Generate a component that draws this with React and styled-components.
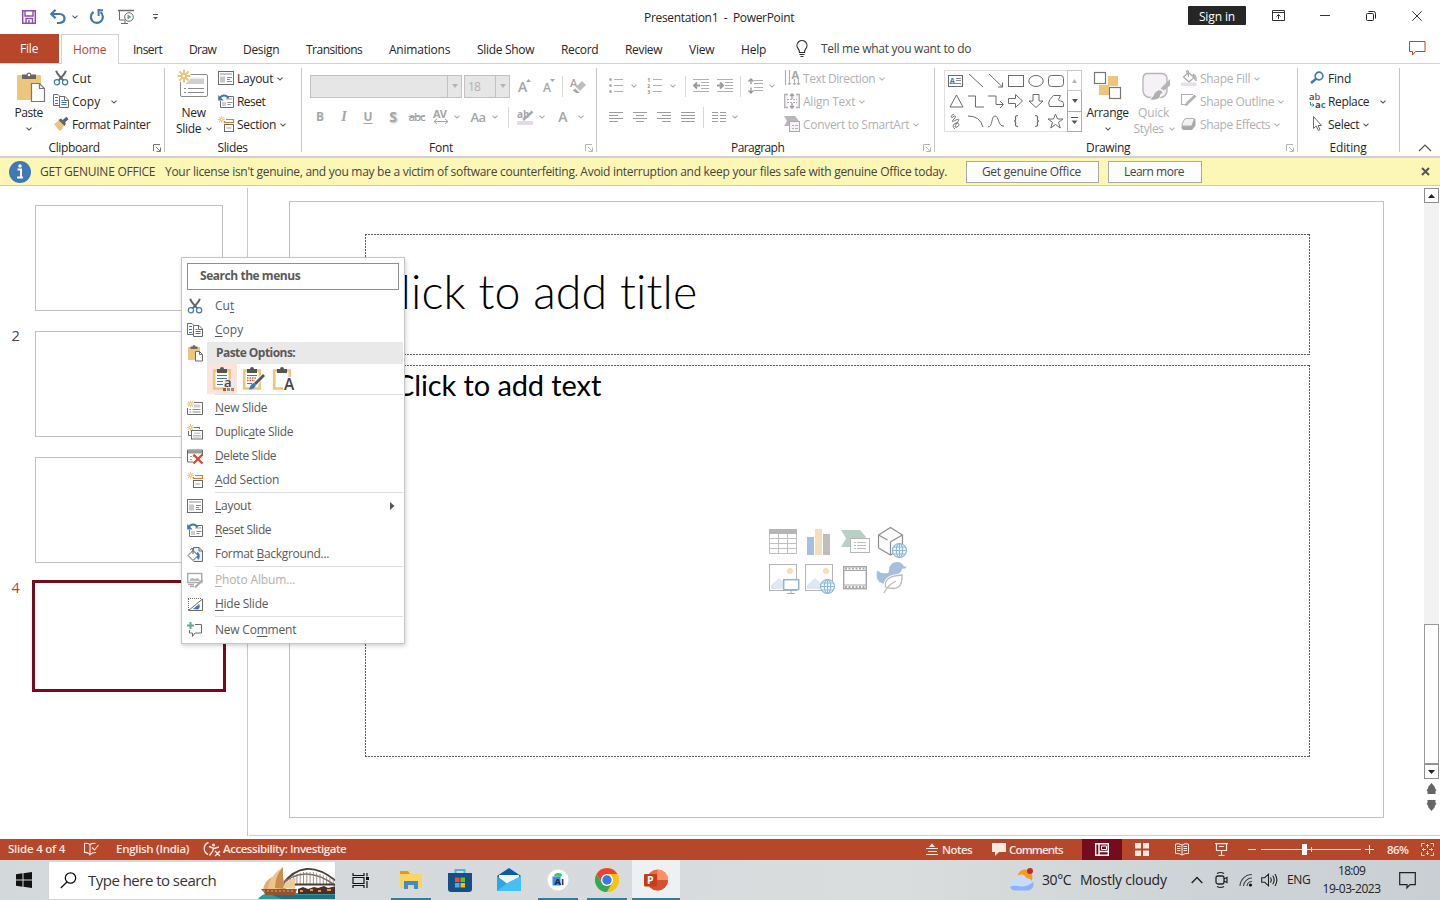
import React, { useLayoutEffect, useRef } from "react";
import styled, { createGlobalStyle, css } from "styled-components";

const Global = createGlobalStyle`
  * { box-sizing: border-box; }
  html, body { margin: 0; padding: 0; background: #fff; overflow: hidden; }
  body { font-family: "Open Sans", "Noto Sans", sans-serif; font-size: 12px; color: #262626; }
  svg { display: block; flex: none; overflow: visible; }
`;

/* ---------- text ---------- */

const Label = styled.span`
  display: block;
  flex: none;
  white-space: pre;
  font-family: ${(p) => p.$family || "inherit"};
  font-size: ${(p) => p.$size || 12}px;
  font-weight: ${(p) => p.$weight || 400};
  color: ${(p) => p.$color || "inherit"};
  line-height: ${(p) => p.$lh || 16}px;
  text-shadow: ${(p) => (p.$shadow ? "1px 1px 2px #bbb" : "none")};
  u { text-underline-offset: 2px; text-decoration-thickness: 1px; text-decoration-skip-ink: none; }
`;

/* A label whose tracking is adjusted so that it takes up w pixels. */
function Text({ w, size, weight, color, lh, family, shadow, children }) {
  const ref = useRef(null);
  useLayoutEffect(() => {
    const el = ref.current;
    if (!w) return;
    el.style.letterSpacing = "0px";
    el.style.width = "max-content";
    const natural = el.getBoundingClientRect().width;
    el.style.letterSpacing = `${(w - 0.8 - natural) / el.textContent.length}px`;
    el.style.width = `${w}px`;
  }, [w]);
  return (
    <Label ref={ref} $size={size} $weight={weight} $color={color} $lh={lh} $family={family} $shadow={shadow}>
      {children}
    </Label>
  );
}

/* ---------- icons ---------- */

const G = "#6b6b6b";
const B = "#3f78b5";
const Y = "#ecc67c";
const D = "#b1b1b1";

const Svg = ({ w = 17, h = w, children, ...r }) => (
  <svg width={w} height={h} viewBox={`0 0 ${w} ${h}`} fill="none" {...r}>{children}</svg>
);

const Chevron = ({ color = "#555" }) => (
  <Svg w={6} h={4}><path d="M.5 .7L3 3.1 5.5 .7" stroke={color} strokeWidth="1.1" /></Svg>
);

const CutIcon = () => (
  <Svg>
    <path d="M3.2 .8Q4 4 10.3 10.3M12.8 .8Q12 4 5.7 10.3" stroke="#666" strokeWidth="2" />
    <circle cx="3.9" cy="12.3" r="2.6" stroke={B} strokeWidth="1.2" />
    <circle cx="12.1" cy="12.3" r="2.6" stroke={B} strokeWidth="1.2" />
  </Svg>
);
const CopyIcon = () => (
  <Svg>
    <path d="M6 12.5H.5V1.5H5L7.5 4" stroke={G} />
    <path d="M2 4.5h3M2 7.5h3M2 10.5h3" stroke={B} />
    <path d="M6.5 3.5H12L15.5 7v7.500H6.500z" fill="#fff" stroke={G} />
    <path d="M11.500 3.500V7.500H15.500" stroke={G} />
    <path d="M8.500 7.500h2M8.500 9.500h5M8.500 11.500h5" stroke={B} />
  </Svg>
);
const PainterIcon = () => (
  <Svg>
    <path d="M1 8L6 4.500 11 10 8 14.500H6z" fill={Y} />
    <path d="M5.500 4L8 2.500 13 7.500 11.500 10z" fill="#5f5f5f" />
    <path d="M10.500 5.500L14.500 2" stroke="#5f5f5f" strokeWidth="3.200" />
  </Svg>
);
const PasteBig = () => (
  <Svg w={30} h={32}>
    <rect x="3" y="6" width="24" height="25" rx="1" fill={Y} />
    <path d="M8 5.500h4.500a2.600 2.600 0 0 1 5 0H22v4.500H8z" fill="#666" />
    <circle cx="15" cy="6" r="1.300" fill="#fff" />
    <path d="M17.500 14.500h8l5 5v13H17.500z" fill="#fff" stroke="#777" strokeWidth="1.200" />
    <path d="M25.500 14.500v5h5" stroke="#777" strokeWidth="1.200" />
  </Svg>
);
const Burst = ({ x, y, r = 5, sw = 1.2 }) => (
  <g transform={`translate(${x} ${y})`} stroke={Y} strokeWidth={sw}>
    {[0, 45, 90, 135].map((a) => <path key={a} d={`M-${r} 0H${r}`} transform={`rotate(${a})`} />)}
    <circle r={r * 0.36} fill="#fff" stroke={Y} />
  </g>
);
const NewSlideBig = () => (
  <Svg w={32} h={32}>
    <rect x="2.500" y="5.500" width="27" height="22" rx="1.500" fill="#fff" stroke="#8a8a8a" />
    <path d="M8 9.500h18v5.500H8z" fill="#cfcfcf" />
    <path d="M6 19.500h2M6 23.500h2M10 19.500h16M10 23.500h16" stroke="#8a8a8a" />
    <circle cx="6" cy="7" r="7" fill="#fff" />
    <Burst x={6} y={7} r={6.500} sw={2} />
  </Svg>
);
const LayoutIcon = () => (
  <Svg>
    <rect x=".5" y="1.500" width="15" height="13" fill="#fff" stroke={G} />
    <path d="M2 3h12v2H2zM2 6.500h5v6H2z" fill="#c8c8c8" />
    <path d="M9 7.500h5M9 9.500h3M9 11.500h5" stroke="#8a8a8a" />
  </Svg>
);
const ResetIcon = () => (
  <Svg>
    <path d="M9 3.500h6.500v11H2.500V8" stroke={G} />
    <path d="M8 5h6v2H8zM4 9h4v4H4z" fill="#cfcfcf" />
    <path d="M9.500 9.500h5M9.500 11.500h3" stroke="#8a8a8a" />
    <path d="M1.500 6C3 2 8 1 10.500 5.500" stroke={B} strokeWidth="2" />
    <path d="M.2 2v5.500h5.500z" fill={B} />
  </Svg>
);
const SectionIcon = () => (
  <Svg>
    <Burst x={3.500} y={3.500} r={3.300} sw={1} />
    <path d="M8 3.500h7.500v3H6.500V5" stroke="#e07a25" strokeWidth="1.200" />
    <rect x="6.500" y="8.500" width="9" height="7" stroke={G} />
    <path d="M8.500 11h5v2h-5z" fill="#cfcfcf" />
  </Svg>
);
const NewSlideIcon = () => (
  <Svg>
    <path d="M7 2.500h8.500v12H.5V8" stroke={G} />
    <path d="M7 4.500h6.500v3H7z" fill="#cfcfcf" />
    <path d="M2.500 9.500h1.500M5.500 9.500h8M2.500 12h1.500M5.500 12h8" stroke="#8a8a8a" />
    <Burst x={3.500} y={4} r={3.500} sw={1} />
  </Svg>
);
const DuplicateIcon = () => (
  <Svg>
    <path d="M7 3.500h5.500V5M1.500 7v4.500H4" stroke={G} />
    <rect x="4.500" y="6.500" width="11" height="8.500" fill="#fff" stroke={G} />
    <path d="M7 8.500h6.500v1.500H7z" fill="#cfcfcf" />
    <path d="M6 11.500h8M6 13h8" stroke="#aaa" strokeWidth=".8" />
    <Burst x={3.500} y={3.500} r={3.500} sw={1} />
  </Svg>
);
const DeleteIcon = () => (
  <Svg>
    <path d="M15.500 7V2H.5v12H6" stroke={G} />
    <path d="M1 2.500h14v3H1z" fill="#999" />
    <path d="M3 8.500h4M3 11.500h3" stroke="#999" strokeDasharray="2 1" />
    <path d="M6.500 6.500l9 9M15.500 6.500l-9 9" stroke="#d24726" strokeWidth="2.200" />
  </Svg>
);
const FormatBgIcon = () => (
  <Svg>
    <path d="M6.500 4V1.500H12L15.500 5v10.500H6.500" fill="#e9f0f7" stroke={G} />
    <path d="M12 1.500V5h3.500" stroke={G} />
    <path d="M10 6c3 1 3.500 4 1.500 8l-2-3z" fill={B} />
    <path d="M6 4.500L11 9.500 6 14.500 1 9.500z" fill="#fff" stroke="#555" />
    <path d="M6 8V3q-1.500-2-2.500 1" stroke="#555" />
  </Svg>
);
const PhotoAlbumIcon = () => (
  <Svg>
    <rect x=".7" y="1.500" width="14" height="9" stroke="#aaa" strokeWidth="1.400" />
    <path d="M2.500 9c1-4 4-3 5-2s3-4 5.500 2z" fill="#bbb" />
    <path d="M1 12.500h6M3 14.500h4" stroke="#aaa" strokeWidth="1.300" />
    <path d="M8 15.500L15.500 8" stroke="#aaa" strokeWidth="2.200" />
  </Svg>
);
const HideIcon = () => (
  <Svg>
    <path d="M1 2.500h13M1.500 3v11" stroke={G} strokeDasharray="1 1" />
    <path d="M1.500 14.500L15.500 3v11.500z" fill="#fff" stroke={G} />
    <path d="M6 13l6-5q2 3-1 5.500z" fill={B} /><path d="M10 9.500l2-1.500.500 2z" fill="#d98b3a" />
  </Svg>
);
const CommentAddIcon = () => (
  <Svg>
    <path d="M3.500 0v7M0 3.500h7" stroke="#6aa58e" strokeWidth="2" />
    <path d="M8 2.500h6.500v8.500H8l-2.500 3.500V11H2.500V8" stroke={G} />
  </Svg>
);
const PasteSmall = () => (
  <Svg>
    <path d="M1 2h12v13H1z" fill={Y} />
    <path d="M3.500 1.500h2a1.500 1.500 0 0 1 3 0h2V4h-7z" fill={G} />
    <path d="M8.500 6.500h4l3 3v6.500h-7z" fill="#fff" stroke={G} /><path d="M12.500 6.500v3h3" stroke={G} />
  </Svg>
);

const PasteOption = ({ kind }) => (
  <Svg w={24} h={24}>
    <path d="M3.200 3.500h15.600v18H3.200z" stroke={Y} strokeWidth="2.600" fill="#fff" />
    <path d="M6 2h3a2 2 0 0 1 4 0h3v4H6z" fill="#555" />
    {kind === "theme" && (<>
      <path d="M6 8.500h10M6 11.500h10M6 14.500h6M6 17.500h6" stroke={B} />
      <path d="M13 12.500h10v11H13z" fill="#fde4dc" />
      <text x="13" y="19.500" fontSize="13" fontWeight="600" fill="#444" fontFamily="Open Sans">a</text>
      <path d="M12 21h3v3h-3z" fill="#d24726" /><path d="M16 21h3v3h-3z" fill="#5ea58c" /><path d="M20 21h3v3h-3z" fill="#e07a25" />
    </>)}
    {kind === "source" && (<>
      <path d="M6 8.500h10M6 16.500h5" stroke={B} />
      <path d="M6 11h10M6 13.500h8" stroke="#d9583a" strokeWidth="1.600" strokeDasharray="1.500 1" />
      <path d="M23 8L14 17" stroke="#fff" strokeWidth="4.500" />
      <path d="M23 8L14 17" stroke="#555" strokeWidth="2.800" />
      <path d="M8 22.500q2-7 5.500-6.500 3 2-1 5.500-2 1-4.500 1z" fill={B} />
    </>)}
    {kind === "text" && (<>
      <path d="M12 10h12v14H12z" fill="#fff" />
      <text x="13" y="23" fontSize="15.500" fontWeight="600" fill="#444" fontFamily="Open Sans">A</text>
    </>)}
  </Svg>
);

const ListIcon = ({ kind }) => (
  <Svg w={16}>
    {kind === "bullets" && [3, 9, 15].map((y) => <g key={y}><circle cx="2.500" cy={y - 1.500} r="1.500" fill={D} /><path d={`M6 ${y - 1.500}h9`} stroke={D} /></g>)}
    {kind === "numbers" && [2, 8, 14].map((y, i) => <g key={y}><text x="0.500" y={y + 1.500} fontSize="4.400" fontWeight="800" fill="#999" fontFamily="Open Sans">{i + 1}</text><path d={`M6 ${y - .5}h9`} stroke={D} /></g>)}
    {kind === "dec" && (<><path d="M0 1.500h16M8 4.500h8M8 7.500h8M8 10.500h8M0 13.500h16" stroke={D} /><path d="M7 7.500H1M4 4.500l-3 3 3 3" stroke="#9a9a9a" strokeWidth="1.800" /></>)}
    {kind === "inc" && (<><path d="M0 1.500h16M8 4.500h8M8 7.500h8M8 10.500h8M0 13.500h16" stroke={D} /><path d="M0 7.500h6M3 4.500l3 3-3 3" stroke="#9a9a9a" strokeWidth="1.800" /></>)}
    {kind === "spacing" && (<><path d="M6 2.500h9M6 5.500h9M6 9.500h9M6 12.500h9" stroke={D} /><path d="M3 1v5M.5 3.500L3 1l2.500 2.500M3 9.500v6M.5 12.500L3 15l2.500-2.500" stroke="#9a9a9a" strokeWidth="1.400" /></>)}
    {kind === "left" && <path d="M1 3.500h14M1 6.500h9M1 9.500h14M1 12.500h9" stroke="#9c9c9c" />}
    {kind === "center" && <path d="M1 3.500h14M4 6.500h8M1 9.500h14M4 12.500h8" stroke="#9c9c9c" />}
    {kind === "right" && <path d="M1 3.500h14M6 6.500h9M1 9.500h14M6 12.500h9" stroke="#9c9c9c" />}
    {kind === "justify" && <path d="M1 3.500h14M1 6.500h14M1 9.500h14M1 12.500h14" stroke="#9c9c9c" />}
    {kind === "columns" && <path d="M1 3.500h6M1 6.500h6M1 9.500h6M1 12.500h6M9 3.500h6M9 6.500h6M9 9.500h6M9 12.500h6" stroke="#9c9c9c" />}
  </Svg>
);

const TextDirIcon = () => (
  <Svg>
    <path d="M1.500 0v15M5.500 0v15M10.500 9v6M14.500 9v6" stroke={D} strokeWidth="1.200" />
    <path d="M9 13l1.500 2L12 13M13 13l1.500 2L16 13M4 13l1.500 2L7 13" stroke={D} />
    <text x="7.500" y="8.500" fontSize="11" fontWeight="700" fill="#a5a5a5" fontFamily="Open Sans">A</text>
  </Svg>
);
const AlignTextIcon = () => (
  <Svg>
    <path d="M4 1.500H.7v13H4M12 1.500h3.300v13H12" fill="#f6f1f7" stroke={D} strokeWidth="1.300" />
    <path d="M3 6.500h10M3 9.500h10" stroke={D} strokeDasharray="2 1" />
    <path d="M8 6V1M6 3l2-2 2 2M8 10v5M6 13l2 2 2-2" stroke="#999" strokeWidth="1.300" />
  </Svg>
);
const SmartArtIcon = () => (
  <Svg>
    <path d="M0 0h11l4 5H5v5H0l3-5z" fill="#b8b8b8" />
    <rect x="5.500" y="5.500" width="10" height="10" fill="#f7f1f8" stroke="#aaa" />
    <path d="M8 9.500h2M11 9.500h3M8 12.500h2M11 12.500h3" stroke={D} />
  </Svg>
);
const FillIcon = () => (
  <Svg>
    <path d="M0 12.500h15.500v3.500H0z" fill="#e6dfe8" />
    <path d="M7.500 2.500L13 7.500 8 12 2.500 7z" stroke="#aaa" fill="#fff" strokeWidth="1.200" />
    <path d="M7.500 7V1q-1.500-2-2.500 1M12 4q4 1 3 7l-2-3z" stroke="#aaa" fill="#aaa" fillOpacity=".6" />
  </Svg>
);
const OutlineIcon = () => (
  <Svg>
    <path d="M12 1.500H.5v10h4" stroke={D} strokeWidth="1.200" />
    <path d="M6 10.500L14.500 2.500" stroke="#b3b3b3" strokeWidth="3" /><path d="M4 13l1-3.500 2.500 2.500z" fill="#aaa" />
  </Svg>
);
const EffectsIcon = () => (
  <Svg>
    <path d="M4 2.500h9q2 0 1.500 2v5L11 14H3q-2.500 0-2.500-3z" fill="#a8a8a8" />
    <path d="M5.500 2.500H12q1.500 0 1 1.500l-1.800 5q-.5 1-1.500 1H2q-1.500 0-1-1.500l2-4.500q.7-1.500 2.500-1.500z" fill="#f4f0f5" stroke={D} />
  </Svg>
);
const ArrangeIcon = () => (
  <Svg w={30} h={32}>
    <path d="M15 7h10v10H15zM6 16h10v10H6z" fill={Y} />
    <rect x="1.500" y="3.500" width="11" height="11" fill="#fff" stroke="#777" strokeWidth="1.200" />
    <rect x="16.500" y="18.500" width="11" height="11" fill="#fff" stroke="#777" strokeWidth="1.200" />
  </Svg>
);
const QuickStylesIcon = () => (
  <Svg w={30} h={32}>
    <path d="M8 4.500h15q5 1 5 5v13q-1 5-6 6H10q-5-1-6-6V10q0-5 4-5.500z" fill="#f5f1f6" stroke="#b5b5b5" strokeWidth="1.300" />
    <path d="M31 10v6.500l-6 5-3.500-2z" fill="#b5b5b5" />
    <path d="M20 20.500q3 0 4 3-3 2-3 5-4 4-11 2 4-2 5-6 2-3 5-4z" fill="#b0b0b0" stroke="#fff" />
  </Svg>
);
const FindIcon = () => (
  <Svg><circle cx="9" cy="6" r="3.800" stroke={B} strokeWidth="1.700" /><path d="M6.500 8.500L1 13" stroke={B} strokeWidth="2.400" /></Svg>
);
const ReplaceIcon = () => (
  <Svg>
    <text x="-1" y="6.500" fontSize="9.500" fontWeight="600" fill="#444" fontFamily="Open Sans">a<tspan fill="#8250a4">b</tspan></text>
    <text x="5" y="15" fontSize="9.500" fontWeight="700" fill="#444" fontFamily="Open Sans">a<tspan fill={B}>c</tspan></text>
    <path d="M.5 9v3h3.500M2.500 10.500L4 12l-1.500 1.500" stroke={B} />
  </Svg>
);
const SelectIcon = () => (
  <Svg><path d="M3.500 .5v12l2.700-2.500 2.200 4.500 1.600-.8-2-4.200h3.500z" fill="#fff" stroke={G} /></Svg>
);
const Launcher = ({ color = "#8a8a8a" }) => (
  <Svg w={9}><path d="M.5 7V.5H7M3 3l4 4M7.500 3.500v4h-4" stroke={color} /></Svg>
);

const shapes = [
  <><rect x="2.500" y="4.500" width="14" height="11" stroke={G} /><text x="3.500" y="12.500" fontSize="8" fontWeight="700" fill={B} fontFamily="Open Sans">A</text><path d="M10 7.500h5M10 9.500h5M4 12.500h11" stroke="#8a8a8a" /></>,
  <path d="M3 3l14 13" stroke={G} />,
  <path d="M3 3l13.500 13M16.500 11.500V16h-4.500" stroke={G} />,
  <rect x="2.500" y="4.500" width="15" height="11" stroke={G} />,
  <ellipse cx="10" cy="10" rx="7.200" ry="5.500" stroke={G} />,
  <rect x="2.500" y="4.500" width="15" height="11" rx="3" stroke={G} />,
  <path d="M10.500 4L17 16H4z" stroke={G} />,
  <path d="M2 5h7.500v11H18" stroke={G} />,
  <path d="M2 5h8v8.500h7M14 10l3.500 3.500L14 17" stroke={G} />,
  <path d="M2.500 7.500h7V3.500l7 6.500-7 6.500v-4h-7z" stroke={G} />,
  <path d="M7 3.500h6V10h4l-7 6.500L3 10h4z" stroke={G} />,
  <path d="M3.500 15.500q-2-4 .5-7l3.500-4h7l-2 4q0 1.500 2 1.500 3 0 3 2.500v3z" stroke={G} />,
  <path d="M8 3.500C4 4 5 8 7 6s4-1 1 2-2 3 2 1 3 0 1 3-3 5 0 4 2-5-1-4-4 4-1 6" stroke={G} />,
  <path d="M2 5q12 0 15 11" stroke={G} />,
  <path d="M2 16C7 16 5 5 9 5s3 11 9 10" stroke={G} />,
  <path d="M12 4.500q-3 0-2.500 2.500.5 3-1.500 3 2 0 1.500 3-.5 2.500 2.500 2.500" stroke={G} strokeWidth="1.200" />,
  <path d="M9 4.500q3 0 2.500 2.500-.5 3 1.500 3-2 0-1.500 3 .5 2.500-2.500 2.500" stroke={G} strokeWidth="1.200" />,
  <path d="M9.500 3l2 5h5.500l-4.500 3.300L14.300 17 9.500 13.500 4.700 17l1.800-5.700L2 8h5.500z" stroke={G} />,
];

/* ---------- frame ---------- */

const Window = styled.div`
  position: relative; width: 1440px; height: 900px; display: flex; flex-direction: column; background: #fff; overflow: hidden;
`;
const Row = styled.div`display: flex; align-items: center; padding-top: 1px;`;
const Slot = styled.div`
  display: flex; flex: none; align-items: center; justify-content: ${(p) => (p.$start ? "flex-start" : "center")};
  width: ${(p) => p.$w}px; margin-left: ${(p) => p.$ml || 0}px; padding-bottom: ${(p) => (p.$up ? 1 : 0)}px;
`;

const TitleBar = styled.header`display: flex; height: 34px; flex: none;`;
const QuickAccess = styled.div`display: flex; width: 644px; height: 34px; align-items: center;`;
const SignIn = styled.button`
  display: flex; justify-content: center; align-items: center; width: 58px; height: 19px; margin: 6px 10px 0 auto; padding: 2px 0 0;
  border: 0; border-radius: 1px; background: #262626; color: #fff; font: inherit;
`;
const WinButton = styled.div`display: flex; width: 46px; height: 31px; align-items: center; justify-content: center;`;

const TabStrip = styled.nav`display: flex; height: 30px; flex: none; border-bottom: 1px solid #d2d2d2;`;
const FileTab = styled.div`display: flex; width: 59px; height: 29px; justify-content: center; align-items: center; background: #b7472a; color: #fff;`;
const HomeTab = styled.div`
  display: flex; width: 58px; height: 30px; margin-left: 2px; padding-top: 1px; justify-content: center; align-items: center;
  border: 1px solid #d2d2d2; border-bottom: 0; background: #fff; color: #b7472a;
`;
const Tabs = styled.div`display: flex; align-items: center; gap: 26px; margin-left: 14px; padding-top: 3px;`;
const TellMe = styled.div`display: flex; align-items: center; margin-left: 28px; color: #444; svg { margin-right: 12px; }`;

const Ribbon = styled.section`display: flex; height: 94px; flex: none; border-bottom: 2px solid #d2d0ce;`;
const GroupBox = styled.div`display: flex; flex-direction: column; width: ${(p) => p.$w}px; flex: none; height: 92px; padding-top: 3px;`;
const GroupBody = styled.div`display: flex; height: 72px; align-items: flex-start;`;
const GroupFoot = styled.div`
  display: flex; height: 16px; margin-top: 1px; align-items: center; justify-content: center;
  svg { margin: 0 2px 0 4px; }
`;
const FootText = styled.div`flex: 1; display: flex; justify-content: center;`;
const GroupLine = styled.div`width: 1px; height: 84px; margin-top: 4px; flex: none; background: #c8c6c4;`;
const SmallLine = styled.div`width: 1px; height: 21px; flex: none; margin-left: ${(p) => p.$ml}px; background: #d8d8d8;`;
const Commands = styled.div`display: flex; flex-direction: column; margin-left: ${(p) => p.$ml}px;`;
const Command = styled.div`
  display: flex; align-items: center; height: 23px; color: ${(p) => (p.$off ? "#b1b1b1" : "#262626")};
  > svg:first-child { margin-right: ${(p) => p.$gap ?? 2}px; }
  > span { padding-top: 1px; }
`;
const Big = styled.div`
  display: flex; flex-direction: column; align-items: center; width: ${(p) => p.$w}px; margin-left: ${(p) => p.$ml}px; padding-top: 2px; flex: none;
  color: ${(p) => (p.$off ? "#b1b1b1" : "#262626")};
`;
const BigLine = styled.div`
  display: flex; height: 16px; align-items: center; justify-content: center; gap: 4px;
  ${Big} > svg + & { margin-top: 4px; }
`;
const ToolRows = styled.div`display: flex; flex-direction: column; margin-left: ${(p) => p.$ml}px; padding-top: 8px; gap: 9px;`;
const ToolRow = styled.div`display: flex; height: 22px; align-items: center; color: #a6a6a6;`;
const Combo = styled.div`
  display: flex; align-items: center; width: ${(p) => p.$w}px; height: 23px; margin: 0 2px 0 ${(p) => p.$ml || 0}px; border: 1px solid #c2c2c2; background: #e6e6e6; color: #b1b1b1;
`;
const ComboValue = styled.div`flex: 1; height: 21px; padding: 3px 0 0 3px;`;
const ComboArrow = styled.div`display: flex; width: 14px; height: 21px; align-items: center; justify-content: center; border-left: 1px solid #c2c2c2;`;
const Gallery = styled.div`display: flex; width: 138px; height: 62px; margin: 3px 0 0 9px; border: 1px solid #e1dfdd; border-right: 0; flex: none;`;
const ShapeGrid = styled.div`display: grid; grid-template-columns: repeat(6, 20px); grid-auto-rows: 20px; width: 122px; padding-left: 1px;`;
const GalleryScroll = styled.div`display: flex; flex-direction: column; width: 15px; margin: -1px 0;`;
const GalleryButton = styled.div`
  display: flex; flex: 1; align-items: center; justify-content: center; border: 1px solid ${(p) => (p.$off ? "#c9c9c9" : "#ababab")}; & + & { border-top: 0; }
`;
const Collapse = styled.div`margin: 79px 0 0 18px;`;

const Banner = styled.div`
  display: flex; height: 28px; flex: none; align-items: center; padding: 0 10px 0 9px; background: #fcf7b6; border-bottom: 1px solid #d3d28b; color: #444;
  > span, > div > span { padding-top: 1px; }
`;
const BannerButton = styled.button`
  display: flex; align-items: center; justify-content: center; width: ${(p) => p.$w}px; height: 22px; margin-left: ${(p) => p.$ml}px; padding: 1px 2px 0 0;
  border: 1px solid #ababab; background: #fdfdfd; color: #444; font: inherit;
`;

function Group({ w, name, nameW, launch, off, children }) {
  return (
    <>
      <GroupBox $w={w}>
        <GroupBody>{children}</GroupBody>
        <GroupFoot>
          <FootText><Text w={nameW}>{name}</Text></FootText>
          {launch && <Launcher color={off ? "#b5b5b5" : "#777"} />}
        </GroupFoot>
      </GroupBox>
      <GroupLine />
    </>
  );
}
function Cmd({ icon, w, off, gap, menu, menuGap = 5, children }) {
  return (
    <Command $off={off} $gap={gap}>
      {icon}
      <Text w={w}>{children}</Text>
      {menu && <Slot $w={6} $ml={menuGap}><Chevron color={off ? "#b1b1b1" : "#555"} /></Slot>}
    </Command>
  );
}
const Drop = ({ w = 8, ml = 0 }) => <Slot $w={w} $ml={ml}><Chevron color="#a9a9a9" /></Slot>;
const Tri = ({ color = "#555", up, w = 7 }) => (
  <Svg w={w} h={4}><path d={up ? `M0 4h${w}L${w / 2} 0z` : `M0 0h${w}L${w / 2} 4z`} fill={color} /></Svg>
);

/* ---------- workspace ---------- */

const Work = styled.main`display: flex; flex: none; height: 653px;`;
const Sidebar = styled.aside`
  width: 248px; margin-top: 2px; height: 648px; padding: 17px 0 0 11px; border-right: 1px solid #c8c8c8; flex: none; display: flex; flex-direction: column; gap: 20px;
`;
const ThumbRow = styled.div`display: flex; height: 106px;`;
const ThumbNo = styled.div`width: 24px; flex: none; padding: 1px 0 0 .5px; font-size: 14.5px; line-height: 8px; color: ${(p) => (p.$active ? "#b7472a" : "#444")};`;
const Thumb = styled.div`
  background: #fff;
  ${(p) => p.$active
    ? css`width: 194px; height: 112px; margin: -3px 0 0 -3px; border: 3px solid #750b1c;`
    : css`width: 188px; height: 106px; border: 1px solid #c2c2c2;`}
`;
const Stage = styled.section`
  flex: 1; height: 650px; margin-left: 1px; padding: 15px 0 0 40px; border-bottom: 1px solid #cfcfcf;
`;
const Slide = styled.div`width: 1095px; height: 617px; padding: 32px 0 0 75px; border: 1px solid #c2c2c2;`;
const dashX = "repeating-linear-gradient(90deg, #5c5c5c 0 2px, transparent 2px 3px)";
const dashY = "repeating-linear-gradient(180deg, #5c5c5c 0 2px, transparent 2px 3px)";
const Placeholder = styled.div`
  width: 945px; height: ${(p) => p.$h}px; margin-bottom: 10px; display: flex; flex-direction: column; color: #000;
  background: ${dashX} top / 100% 1px no-repeat, ${dashX} bottom / 100% 1px no-repeat, ${dashY} left / 1px 100% no-repeat, ${dashY} right / 1px 100% no-repeat;
`;
const TitleText = styled.div`padding: 27px 0 0 4px;`;
const BodyText = styled.div`display: flex; gap: 11px; padding: 0 0 1px 9px;`;
const InsertGrid = styled.div`display: grid; grid-template-columns: repeat(4, 36px); grid-auto-rows: 36px; margin: 118px 0 0 400px;`;
const Scroll = styled.div`
  display: flex; flex-direction: column; width: 16px; height: 650px; padding: 2px 1px 0 0; align-items: center; border-bottom: 1px solid #cfcfcf;
`;
const ScrollButton = styled.div`display: flex; width: 15px; height: 15px; align-items: center; justify-content: center; border: 1px solid #8f8f8f; flex: none;`;
const Track = styled.div`width: 15px; height: 421px; background: #f2f2f2; flex: none;`;
const ThumbBar = styled.div`width: 15px; height: 140px; border: 1px solid #999; flex: none;`;
const PageArrows = styled.div`display: flex; flex-direction: column; gap: 6px; padding-top: 4px;`;

const DoubleArrow = ({ flip }) => (
  <Svg w={11} h={11}><path transform={flip ? "rotate(180 5.500 5.500)" : undefined} d="M5.500 0L9 4H8.500L10.500 8H9.500V11H1.500V8H.5L2.500 4H2z" fill="#666" /></Svg>
);
const Globe = ({ x, y }) => (
  <g stroke="#8ab8e0" strokeWidth="1.200" transform={`translate(${x} ${y})`}>
    <circle r="7" fill="#fff" /><ellipse rx="3.200" ry="7" /><path d="M-7 0H7M0-7V7M-6-3.500H6M-6 3.500H6" />
  </g>
);
const Cell = ({ children }) => <Svg w={36}>{children}</Svg>;

/* ---------- context menu ---------- */

const Menu = styled.div`
  position: absolute; left: 181px; top: 257px; width: 224px; height: 387px; padding: 5px 0 0; border: 1px solid #c6c6c6;
  background: #fff; color: #5a5a5a; box-shadow: 1px 2px 4px rgba(0, 0, 0, .18);
`;
const MenuSearch = styled.div`display: flex; align-items: center; width: 212px; height: 27px; margin: 0 0 4px 5px; padding: 0 0 2px 12px; border: 1px solid #8f8f8f;`;
const MenuItem = styled.div`
  display: flex; align-items: center; height: 24px; padding-left: 5px; color: ${(p) => (p.$off ? "#b1b1b1" : "#5a5a5a")};
  > svg:first-child { margin-right: 11px; }
`;
const MenuArrow = styled.div`margin: 0 9px 0 auto;`;
const MenuHead = styled.div`display: flex; height: 22px; padding-left: 5px; align-items: center; > svg { margin-right: 3px; }`;
const MenuHeadText = styled.div`flex: 1; height: 22px; margin-right: 1px; padding: 3px 0 0 9px; background: #e9e9e9;`;
const PasteRow = styled.div`display: flex; height: 30px; padding-left: 25px;`;
const PasteCell = styled.div`display: flex; width: 30px; height: 30px; align-items: center; justify-content: center; padding: 0 0 0 2px; background: ${(p) => (p.$on ? "#fde3dc" : "none")};`;
const MenuLine = styled.div`height: 1px; margin: 0 1px 1px 33px; background: #dcdfe2;`;

function Item({ icon, w, off, arrow, children }) {
  return (
    <MenuItem $off={off}>
      {icon}<Text w={w}>{children}</Text>
      {arrow && <MenuArrow><Svg w={5} h={8}><path d="M0 0l4.500 4L0 8z" fill="#555" /></Svg></MenuArrow>}
    </MenuItem>
  );
}

/* ---------- bottom bars ---------- */

const Status = styled.footer`display: flex; height: 21px; flex: none; align-items: center; background: #b7472a; color: #fbe9e4;`;
const ViewSlot = styled.div`display: flex; width: ${(p) => p.$w}px; height: 21px; align-items: center; justify-content: center; flex: none; margin-left: ${(p) => p.$ml || 0}px; background: ${(p) => (p.$on ? "#750b1c" : "none")};`;
const Taskbar = styled.footer`
  display: flex; height: 40px; flex: none; align-items: center; background: linear-gradient(90deg, #d3d8db 0%, #d7dadd 35%, #dadddd 62%, #cdd3d6 85%, #c9cfd3 100%);
`;
const SearchBox = styled.div`display: flex; width: 288px; height: 39px; align-items: center; background: #fff; border: 1px solid #d5d5d5; padding-left: 11px; overflow: hidden;`;
const TaskButton = styled.div`
  display: flex; width: ${(p) => p.$w || 49}px; height: 40px; align-items: center; justify-content: center; flex: none;
  background: ${(p) => (p.$open ? "linear-gradient(#2b7f9f, #2b7f9f) bottom / 40px 2px no-repeat" : "none")};
  ${(p) => p.$focus && css`background: linear-gradient(#2b7f9f, #2b7f9f) bottom / 100% 2px no-repeat #eff0f1; width: 48px; margin-left: 1px;`}
`;
const Clock = styled.div`display: flex; flex-direction: column; align-items: center; width: 60px; margin-left: 11px; gap: 2px;`;

const OperaHouse = () => (
  <Svg w={78} h={38} viewBox="0 0 78 38">
    <path d="M0 38q4-5 10-6h68v6z" fill="#2b9aa0" /><path d="M14 34h64v4H24z" fill="#22707f" />
    <path d="M24 24Q46-6 78 20" stroke="#4a423c" strokeWidth="1.800" /><path d="M22 25Q46 1 78 25" stroke="#7a6c5e" strokeWidth="1.300" />
    {Array.from({ length: 15 }, (_, i) => <path key={i} d={`M${29 + i * 3.300} ${Math.max(11, 17 - i * 1.300, i * 1.300)}V23`} stroke="#85796c" strokeWidth=".8" />)}
    <path d="M20 23.500h58" stroke="#4a3a32" strokeWidth="1.800" />
    <path d="M40 28l5-2 5 2 6-2 4 1 6-2 4 2 8-2v8H40z" fill="#4a2d2c" /><path d="M42 29h3v2h-3zM52 28h3v2h-3zM60 29h3v2h-3zM69 28h4v2h-4z" fill="#e6963c" />
    <path d="M5 29q1-9 9-13-3 8 1 13z" fill="#e0b078" /><path d="M10 28Q11 15 25 6q-1 14 3 22z" fill="#edc48a" />
    <path d="M17 27Q17 15 25 6q-1 12 3 22z" fill="#c88d50" /><path d="M25 27q1-8 13-10-2 5-1 11z" fill="#efcb97" />
    <path d="M3 28h36l-2 6H8z" fill="#96522c" /><path d="M5 30h32" stroke="#e7a45e" strokeDasharray="2 2" />
  </Svg>
);
const ChromeIcon = () => (
  <Svg w={24}>
    <circle cx="12" cy="12" r="12" fill="#fbc116" />
    <path d="M1.600 6A12 12 0 0 1 22.400 6H12L7 15z" fill="#ea4335" />
    <path d="M1.600 6A12 12 0 0 0 12 24l5.200-9-5.200 2-5.200-2z" fill="#34a853" />
    <path d="M22.400 6A12 12 0 0 1 12 24l5.200-9L17 8 12 6z" fill="#fbc116" />
    <circle cx="12" cy="12" r="6" fill="#fff" /><circle cx="12" cy="12" r="4.700" fill="#3b78e7" />
  </Svg>
);

const tabs = [["Insert", 30], ["Draw", 28], ["Design", 37], ["Transitions", 57], ["Animations", 62], ["Slide Show", 58], ["Record", 38], ["Review", 38], ["View", 26], ["Help", 26]];

export default function App() {
  return (
    <Window>
      <Global />
      <TitleBar>
        <QuickAccess>
          <Slot $w={16} $ml={21}>
            <Svg w={16}><path d="M1.700 1.700h12.600v12.600H1.700z" stroke="#8a4fa8" strokeWidth="1.500" /><path d="M4 2v5h8V2M5 14v-4.500h6.500V14M8 11v3" stroke="#8a4fa8" strokeWidth="1.400" /></Svg>
          </Slot>
          <Slot $w={16} $ml={13}>
            <Svg w={16}><path d="M1.500 5H9.500q5 .5 5 4.500t-5 4.500H7" stroke={B} strokeWidth="2.200" /><path d="M5.500 .8L1.300 5l4.200 4.200" stroke={B} strokeWidth="2.200" /></Svg>
          </Slot>
          <Slot $w={8} $ml={5}><Chevron /></Slot>
          <Slot $w={16} $ml={10}>
            <Svg w={16}><path d="M4.500 3A6 6 0 1 0 11.500 3.200" stroke={B} strokeWidth="2.200" /><path d="M8.500 1.200H14M9.600 0v7" stroke={B} strokeWidth="2" /></Svg>
          </Slot>
          <Slot $w={16} $ml={13}>
            <Svg w={17} h={16}><path d="M0 1.500h16" stroke={G} strokeWidth="1.500" /><path d="M1.500 2v9h6M3 14.500h7M7 11.500v3" stroke={G} /><circle cx="11" cy="8" r="4.300" stroke={G} fill="#fff" /><path d="M9.500 5.500l4 2.500-4 2.500z" fill="#5ea58c" /></Svg>
          </Slot>
          <Slot $w={8} $ml={17}><Svg w={7} h={7}><path d="M1 .5h5" stroke="#555" /><path d="M1 3h5L3.500 5.500z" fill="#555" /></Svg></Slot>
        </QuickAccess>
        <Row><Text w={151}>{"Presentation1  -  PowerPoint"}</Text></Row>
        <SignIn><Text w={37}>Sign in</Text></SignIn>
        <WinButton><Svg w={14} h={12}><path d="M.5 .5h12v10H.5zM.5 2.500h12M6.500 9V5M4.500 6.500l2-2 2 2" stroke="#333" /></Svg></WinButton>
        <WinButton><Svg w={10} h={10}><path d="M0 4.500h10" stroke="#333" /></Svg></WinButton>
        <WinButton><Svg w={10} h={10}><rect x=".5" y="2.500" width="7" height="7" rx="1" stroke="#222" /><path d="M2.500 .5h5q2 0 2 2v5" stroke="#222" /></Svg></WinButton>
        <WinButton><Svg w={10} h={10}><path d="M.3 .3l9.400 9.400M9.700 .3L.3 9.700" stroke="#333" /></Svg></WinButton>
      </TitleBar>

      <TabStrip>
        <FileTab><Text w={19}>File</Text></FileTab>
        <HomeTab><Text w={34}>Home</Text></HomeTab>
        <Tabs>{tabs.map(([t, w]) => <Text key={t} w={w}>{t}</Text>)}</Tabs>
        <TellMe>
          <Svg w={14} h={18}><path d="M4.500 12.500Q4.500 10 3 8.500A5 5 0 1 1 11 8.500Q9.500 10 9.500 12.500zM4.500 14.500h5M5.500 16.500h3" stroke="#333" strokeWidth="1.200" /></Svg>
          <Text w={151}>Tell me what you want to do</Text>
        </TellMe>
        <Slot $w={17} $ml={437}><Svg w={17} h={15}><path d="M.5 .5h15.500v10H6.500L3.500 14v-3.500H.5z" stroke="#b7472a" /></Svg></Slot>
      </TabStrip>

      <Ribbon>
        <Group w={164} name="Clipboard" nameW={52} launch>
          <Big $w={44} $ml={7}><PasteBig /><BigLine><Text w={29}>Paste</Text></BigLine><BigLine><Chevron /></BigLine></Big>
          <Commands $ml={2}>
            <Cmd icon={<CutIcon />} w={20}>Cut</Cmd>
            <Cmd icon={<CopyIcon />} w={29} menu menuGap={10}>Copy</Cmd>
            <Cmd icon={<PainterIcon />} w={79}>Format Painter</Cmd>
          </Commands>
        </Group>
        <Group w={136} name="Slides" nameW={31}>
          <Big $w={46} $ml={6}><NewSlideBig /><BigLine><Text w={25}>New</Text></BigLine><BigLine><Text w={26}>Slide</Text><Chevron /></BigLine></Big>
          <Commands $ml={1}>
            <Cmd icon={<LayoutIcon />} w={37} menu menuGap={3}>Layout</Cmd>
            <Cmd icon={<ResetIcon />} w={29}>Reset</Cmd>
            <Cmd icon={<SectionIcon />} w={40} menu menuGap={3}>Section</Cmd>
          </Commands>
        </Group>
        <Group w={294} name="Font" nameW={25} launch off>
          <ToolRows $ml={6}>
            <ToolRow>
              <Combo $w={152} $ml={2}><ComboValue /><ComboArrow><Tri w={6} color="#b5b5b5" /></ComboArrow></Combo>
              <Combo $w={46}><ComboValue><Text w={13}>18</Text></ComboValue><ComboArrow><Tri w={6} color="#b5b5b5" /></ComboArrow></Combo>
              <Slot $w={20} $ml={2}><Svg w={16} h={16}><text x="2" y="14" fontSize="14" fontWeight="600" fill="#a6a6a6" fontFamily="Open Sans">A</text><path d="M10 4h5l-2.500-3z" fill="#a6a6a6" /></Svg></Slot>
              <Slot $w={20} $ml={5}><Svg w={16} h={16}><text x="2" y="14" fontSize="12" fontWeight="600" fill="#a6a6a6" fontFamily="Open Sans">A</text><path d="M9 1h5l-2.500 3z" fill="#a6a6a6" /></Svg></Slot>
              <SmallLine $ml={3} />
              <Slot $w={20} $ml={6}><Svg w={16}><text x="-1" y="9" fontSize="11" fontWeight="600" fill="#a6a6a6" fontFamily="Open Sans">A</text><path d="M5 9l6-6 4 4-6 6z" fill="#bdbdbd" /><path d="M4 10.500l5 4.500h-4l-3-2.500z" fill="#a6a6a6" /></Svg></Slot>
            </ToolRow>
            <ToolRow>
              <Slot $w={24}><Text weight={700}>B</Text></Slot>
              <Slot $w={24}><Text family='"Liberation Serif", serif' size={14} weight={700}><i>I</i></Text></Slot>
              <Slot $w={24}><Text weight={700}><u>U</u></Text></Slot>
              <Slot $w={26}><Text weight={700} size={14} shadow>S</Text></Slot>
              <Slot $w={22}><Text w={17} size={11.5} weight={600}><s>abc</s></Text></Slot>
              <Slot $w={25}><Svg w={16}><text x="0" y="9" fontSize="11" fontWeight="700" fill="#a6a6a6" fontFamily="Open Sans" textLength="14">AV</text><path d="M1 12.500h14M4 10l-3 2.500L4 15M12 10l3 2.500-3 2.500" stroke="#a6a6a6" /></Svg></Slot>
              <Drop />
              <Slot $w={25} $ml={5}><Text w={16} size={13} weight={600}>Aa</Text></Slot><Drop />
              <SmallLine $ml={9} />
              <Slot $w={21} $ml={5}><Svg w={16}><text x="0" y="9" fontSize="10" fontWeight="700" fill="#a6a6a6" fontFamily="Open Sans">ab</text><path d="M6 11L15.500 2.500" stroke="#aaa" strokeWidth="2.500" /><path d="M0 12h16v4H0z" fill="#e3dce5" /></Svg></Slot>
              <Drop w={14} />
              <Slot $w={28}><Text size={14} weight={600}>A</Text></Slot><Drop />
            </ToolRow>
          </ToolRows>
        </Group>
        <Group w={337} name="Paragraph" nameW={54} launch off>
          <ToolRows $ml={9}>
            <ToolRow>
              <Slot $w={20}><ListIcon kind="bullets" /></Slot><Drop ml={4} />
              <Slot $w={20} $ml={7}><ListIcon kind="numbers" /></Slot><Drop ml={4} />
              <SmallLine $ml={8} />
              <Slot $w={20} $ml={5}><ListIcon kind="dec" /></Slot>
              <Slot $w={20} $ml={4}><ListIcon kind="inc" /></Slot>
              <SmallLine $ml={5} />
              <Slot $w={20} $ml={5}><ListIcon kind="spacing" /></Slot><Drop ml={2} />
            </ToolRow>
            <ToolRow>
              <Slot $w={20}><ListIcon kind="left" /></Slot>
              <Slot $w={20} $ml={4}><ListIcon kind="center" /></Slot>
              <Slot $w={20} $ml={4}><ListIcon kind="right" /></Slot>
              <Slot $w={20} $ml={4}><ListIcon kind="justify" /></Slot>
              <SmallLine $ml={5} />
              <Slot $w={20} $ml={5}><ListIcon kind="columns" /></Slot><Drop ml={2} />
            </ToolRow>
          </ToolRows>
          <Commands $ml={8}>
            <Cmd off icon={<TextDirIcon />} w={73} menu menuGap={3}>Text Direction</Cmd>
            <Cmd off icon={<AlignTextIcon />} w={53} menu menuGap={3}>Align Text</Cmd>
            <Cmd off icon={<SmartArtIcon />} w={107} menu menuGap={3}>Convert to SmartArt</Cmd>
          </Commands>
        </Group>
        <Group w={362} name="Drawing" nameW={45} launch off>
          <Gallery>
            <ShapeGrid>{shapes.map((s, i) => <Svg key={i} w={20}>{s}</Svg>)}</ShapeGrid>
            <GalleryScroll>
              <GalleryButton $off><Tri up w={5} color="#b5b5b5" /></GalleryButton>
              <GalleryButton><Tri w={6} /></GalleryButton>
              <GalleryButton><Svg w={7} h={8}><path d="M0 .5h7" stroke="#555" /><path d="M.5 3.500h6L3.500 7z" fill="#555" /></Svg></GalleryButton>
            </GalleryScroll>
          </Gallery>
          <Big $w={46} $ml={3}><ArrangeIcon /><BigLine><Text w={43}>Arrange</Text></BigLine><BigLine><Chevron /></BigLine></Big>
          <Big $w={46} $ml={0} $off><QuickStylesIcon /><BigLine><Text w={32}>Quick</Text></BigLine><BigLine><Text w={31}>Styles</Text><Chevron color="#b1b1b1" /></BigLine></Big>
          <Commands $ml={4}>
            <Cmd off icon={<FillIcon />} w={51} menu menuGap={3}>Shape Fill</Cmd>
            <Cmd off icon={<OutlineIcon />} w={75} menu menuGap={3}>Shape Outline</Cmd>
            <Cmd off icon={<EffectsIcon />} w={71} menu menuGap={3}>Shape Effects</Cmd>
          </Commands>
        </Group>
        <Group w={101} name="Editing" nameW={38}>
          <Commands $ml={12}>
            <Cmd icon={<FindIcon />} w={24} gap={1}>Find</Cmd>
            <Cmd icon={<ReplaceIcon />} w={42} gap={1} menu menuGap={10}>Replace</Cmd>
            <Cmd icon={<SelectIcon />} w={32} gap={1} menu menuGap={3}>Select</Cmd>
          </Commands>
        </Group>
        <Collapse><Svg w={14} h={9}><path d="M1 8l6-6 6 6" stroke="#555" strokeWidth="1.200" /></Svg></Collapse>
      </Ribbon>

      <Banner>
        <Svg w={22}><circle cx="11" cy="11" r="11" fill="#4178b4" /><circle cx="11" cy="5" r="1.700" fill="#fff" /><path d="M8.500 8.500h3.500V16M8 16.500h6" stroke="#fff" strokeWidth="2" /></Svg>
        <Slot $w={125} $ml={9} $start><Text w={116} weight={500}>GET GENUINE OFFICE</Text></Slot>
        <Text w={783}>Your license isn't genuine, and you may be a victim of software counterfeiting. Avoid interruption and keep your files safe with genuine Office today.</Text>
        <BannerButton $w={133} $ml={18}><Text w={100}>Get genuine Office</Text></BannerButton>
        <BannerButton $w={94} $ml={9}><Text w={61}>Learn more</Text></BannerButton>
        <Slot $w={10} $ml={218}><Svg w={9}><path d="M1 1l7 7M8 1L1 8" stroke="#555" strokeWidth="2" /></Svg></Slot>
      </Banner>

      <Work>
        <Sidebar>
          <ThumbRow><ThumbNo /><Thumb /></ThumbRow>
          <ThumbRow><ThumbNo>2</ThumbNo><Thumb /></ThumbRow>
          <ThumbRow><ThumbNo /><Thumb /></ThumbRow>
          <ThumbRow><ThumbNo $active>4</ThumbNo><Thumb $active /></ThumbRow>
        </Sidebar>
        <Stage>
          <Slide>
            <Placeholder $h={121}>
              <TitleText><Text w={330} size={46.5} weight={300} lh={60} family='Lato, "Open Sans", sans-serif'>Click to add title</Text></TitleText>
            </Placeholder>
            <Placeholder $h={392}>
              <BodyText>
                <Text w={10} size={29} lh={40} family="Lato, sans-serif">•</Text>
                <Text w={207} size={29} lh={40} family="Lato, sans-serif">Click to add text</Text>
              </BodyText>
              <InsertGrid>
                <Cell><path d="M4.500 6v23.500h27V6M4.500 14.500h27M4.500 19.500h27M4.500 24.500h27M13.500 9v20M22.500 9v20" stroke="#c0c0c0" /><path d="M4 5h28v5H4z" fill="#b5b5b5" /></Cell>
                <Cell><path d="M6 13h7v18H6z" fill="#a5bfdc" /><path d="M14 5h7v26h-7z" fill="#f4dfb8" /><path d="M22 10h7v21h-7z" fill="#bdbdbd" /></Cell>
                <Cell><path d="M4 6h19l6 7-6 10H4l5-8.500z" fill="#b5d2c5" /><rect x="13.500" y="14.500" width="19" height="14" fill="#fff" stroke="#b5b5b5" /><path d="M17 18.500h2M17 21.500h2M17 24.500h2M20 18.500h9M20 21.500h9M20 24.500h9" stroke="#bbb" /></Cell>
                <Cell><path d="M5.500 11L17.500 3.500 29.500 11V24L17.500 31 5.500 24zM5.500 11l9 5M18 17.500L29.500 11M17.500 17.500V31" fill="#fbfbfb" stroke="#8f8f8f" strokeWidth="1.200" /><Globe x={26.500} y={26.500} /></Cell>
                <Cell><rect x="4.500" y="4.500" width="27" height="26" stroke="#b5b5b5" /><circle cx="25" cy="11" r="3" fill="#f4dfb8" /><path d="M6 29v-4l8-7 8 7v4z" fill="#dfe8f2" /><rect x="18.700" y="19.700" width="15" height="10" fill="#fff" stroke="#8fb3d9" strokeWidth="1.500" /><path d="M26 30v3M22 33.500h8" stroke="#8fb3d9" /></Cell>
                <Cell><rect x="4.500" y="4.500" width="27" height="26" stroke="#b5b5b5" /><circle cx="25" cy="11" r="3" fill="#f4dfb8" /><path d="M6 29v-4l8-7 8 7v4z" fill="#dfe8f2" /><Globe x={26.500} y={26.500} /></Cell>
                <Cell><rect x="6.700" y="6.700" width="22.600" height="22" stroke="#a8a8a8" strokeWidth="1.400" /><path d="M8 8.500h21M8 27h21" stroke="#a8a8a8" strokeWidth="2" strokeDasharray="2 1.500" /><path d="M7 10.500h22M7 25h22" stroke="#a8a8a8" /></Cell>
                <Cell><path d="M4 10.500q4 3.500 11 2.500 1-1 1-3 1-8 8-8 5 0 7 4.500h2.500l-1 2h-3q-1 3.500-4 5l1 3-12 8q-11-1-11-9z" fill="#a5bfdc" /><path d="M12.500 27q-2-11 16.500-12 1 18-16.500 12z" fill="#fff" stroke="#fff" strokeWidth="3" /><path d="M12.500 27q-2-11 16.500-12 1 18-16.500 12zM11 33q4-8 12-12" fill="#fff" stroke="#bbb" strokeWidth="1.300" /></Cell>
              </InsertGrid>
            </Placeholder>
          </Slide>
        </Stage>
        <Scroll>
          <ScrollButton><Tri up w={7} color="#222" /></ScrollButton>
          <Track />
          <ThumbBar />
          <ScrollButton><Tri w={7} color="#222" /></ScrollButton>
          <PageArrows><DoubleArrow /><DoubleArrow flip /></PageArrows>
        </Scroll>
      </Work>

      <Status>
        <Slot $w={58} $ml={8} $start $up><Text w={58} weight={600} size={11.5}>Slide 4 of 4</Text></Slot>
        <Slot $w={16} $ml={17} $up><Svg w={16} h={14}><path d="M7 2.500Q4 .8 1.500 1.500v9Q4 10 7 12.500M7 2.500v10Q9 10.500 13 10.500M7 2.500q2-1.500 5.500-1M9 5.500l2.500 2.500 4-5" stroke="#fbe9e4" strokeWidth="1.100" /></Svg></Slot>
        <Slot $w={74} $ml={17} $start $up><Text w={74} weight={600} size={11.5}>English (India)</Text></Slot>
        <Slot $w={17} $ml={14} $up><Svg w={17} h={16}><path d="M4.500 1.500A6.500 6.500 0 0 0 4 13.500M5 5.500l5 2 5-1.500M9.500 7.500l-1 3-3 4M11 10l5 5M16 10l-5 5" stroke="#fbe9e4" strokeWidth="1.400" /><circle cx="9.500" cy="4" r="1.500" fill="#fbe9e4" /></Svg></Slot>
        <Slot $w={124} $ml={2} $start $up><Text w={124} weight={600} size={11.5}>Accessibility: Investigate</Text></Slot>
        <Slot $w={13} $ml={578}><Svg w={12} h={13}><path d="M0 5.500h12M2 8.500h9M0 11.500h12" stroke="#fbe9e4" /><path d="M3 4l3-3.500L9 4z" fill="#fbe9e4" /></Svg></Slot>
        <Slot $w={31} $ml={4} $start><Text w={31} weight={600} size={11.5}>Notes</Text></Slot>
        <Slot $w={15} $ml={18}><Svg w={14} h={14}><path d="M0 0h14v9H7l-4 4V9H0z" fill="#fbe9e4" /></Svg></Slot>
        <Slot $w={55} $ml={3} $start><Text w={54.5} weight={600} size={11.5}>Comments</Text></Slot>
        <ViewSlot $w={40} $ml={18} $on><Svg w={14} h={13}><path d="M.7 .7h12.600v11.600H.7zM4 1v11M4 8.500h9" stroke="#fff" strokeWidth="1.400" /><path d="M6.500 3h5v3.500h-5z" stroke="#fff" /></Svg></ViewSlot>
        <ViewSlot $w={40}><Svg w={14} h={13}><path d="M0 0h6v5.500H0zM8 0h6v5.500H8zM0 7.500h6V13H0zM8 7.500h6V13H8z" fill="#fbe9e4" /></Svg></ViewSlot>
        <ViewSlot $w={40}><Svg w={14} h={13}><path d="M7 2Q4 0 .5 1v9.500Q4 10 7 12q3-2 6.500-1.500V1Q10 0 7 2v10M2 3.500h3.500M2 5.500h3.500M2 7.500h3.500M8.500 3.500H12M8.500 5.500H12M8.500 7.500H12" stroke="#fbe9e4" /></Svg></ViewSlot>
        <ViewSlot $w={40}><Svg w={14} h={13}><path d="M0 .7h13M1.500 1v6.500h10V1M6.500 7.500V12M3.500 12.500h6M4 3.500h5" stroke="#fbe9e4" strokeWidth="1.200" /></Svg></ViewSlot>
        <Slot $w={10} $ml={5}><Svg w={8} h={9}><path d="M0 4.500h8" stroke="#fff" /></Svg></Slot>
        <Slot $w={100} $ml={4}><Svg w={100} h={11}><path d="M0 5.500h100M50.500 3v5" stroke="#fbe9e4" /><path d="M41 0h5v11h-5z" fill="#fff" /></Svg></Slot>
        <Slot $w={10} $ml={3}><Svg w={9} h={9}><path d="M0 4.500h9M4.500 0v9" stroke="#fff" /></Svg></Slot>
        <Slot $w={22} $ml={13} $start><Text w={22} weight={600} size={11.5}>86%</Text></Slot>
        <Slot $w={14} $ml={11}><Svg w={13} h={13}><path d="M.5 3.500v-3h3M9.500 .5h3v3M12.500 9.500v3h-3M3.500 12.500h-3v-3M6.500 1v4M6.500 8v4M1 6.500h4M8 6.500h4M5 3l1.500-1.500L8 3M5 10l1.500 1.500L8 10M3 5L1.500 6.500 3 8M10 5l1.500 1.500L10 8" stroke="#fbe9e4" strokeWidth=".9" /></Svg></Slot>
      </Status>

      <Taskbar>
        <TaskButton $w={48}><Svg w={16}><path d="M0 2.300L6.500 1.300V7.500H0zM7.500 1.200L16 0v7.500H7.500zM0 8.500h6.500v6.200L0 13.700zM7.500 8.500H16V16l-8.500-1.200z" fill="#111" /></Svg></TaskButton>
        <SearchBox>
          <Svg w={17}><circle cx="10.500" cy="6" r="5.200" stroke="#111" strokeWidth="1.300" /><path d="M7 10L.8 16" stroke="#111" strokeWidth="1.300" /></Svg>
          <Slot $w={170} $ml={11} $start><Text w={129} size={15} lh={20} color="#333">Type here to search</Text></Slot>
          <Slot $w={78} $ml={0}><OperaHouse /></Slot>
        </SearchBox>
        <TaskButton $w={49}><Svg w={17}><path d="M1 1v2.500h11V1M1 5.500h11v6H1zM1 16v-2.500h11V16M15 1v3.500M15 9v7" stroke="#111" strokeWidth="1.200" /><path d="M14 5h3v3h-3z" fill="#111" /></Svg></TaskButton>
        <TaskButton $w={51} $open><Svg w={22} h={20}><path d="M0 1h8l2 3v5H0z" fill="#dc9d10" /><path d="M0 4h22v14H0z" fill="#fcd462" /><path d="M4 19v-8h14v8h-4v-4H8v4z" fill="#3a8ed0" /></Svg></TaskButton>
        <TaskButton $w={48}><Svg w={24}><path d="M7.500 5V2h9v3" stroke="#3dbbe8" strokeWidth="2" /><path d="M0 5h24v16q0 3-3 3H3q-3 0-3-3z" fill="#154f86" /><path d="M7 9.500h4.500V14H7z" fill="#f25022" /><path d="M12.500 9.500H17V14h-4.500z" fill="#7fba00" /><path d="M7 15h4.500v4.500H7z" fill="#3ab3f0" /><path d="M12.500 15H17v4.500h-4.500z" fill="#ffb900" /></Svg></TaskButton>
        <TaskButton><Svg w={24}><path d="M0 8L12 0l12 8v3H0z" fill="#0b5ca8" /><path d="M2 7h20v9H2z" fill="#f3f6f8" /><path d="M0 8l12 9L24 8v15H0z" fill="#2fa5e4" /><path d="M0 23L12 14l12-6v15z" fill="#45c0f4" /></Svg></TaskButton>
        <TaskButton $open><Svg w={22}><circle cx="11" cy="11" r="10.500" fill="#fff" /><path d="M5.500 7.500h8v9h-8z" fill="#3c8af0" /><path d="M7 7a4.500 3.500 0 0 1 8.500-1l-2 2z" fill="#35c983" /><text x="7.500" y="16" fontSize="9.500" fontWeight="700" fill="#12283f" fontFamily="Open Sans">AI</text></Svg></TaskButton>
        <TaskButton $open><ChromeIcon /></TaskButton>
        <TaskButton $focus><Svg w={24} h={22}><circle cx="13.500" cy="11" r="10.500" fill="#ed6c47" /><path d="M13.500 .5A10.500 10.500 0 0 1 24 11H13.500z" fill="#ff8f6b" /><path d="M3 11h21a10.500 10.500 0 0 1-21 0z" fill="#d35230" /><rect x="0" y="5" width="13" height="12.500" rx="1" fill="#c43e1c" /><text x="3" y="15" fontSize="10.500" fontWeight="700" fill="#fff" fontFamily="Open Sans">P</text></Svg></TaskButton>
        <Slot $w={25} $ml={329}><Svg w={25} h={26}><circle cx="16" cy="10" r="7.500" fill="#f59a23" /><circle cx="21" cy="4" r="3" fill="#c42b1c" /><path d="M6 23.500a5.500 5.500 0 0 1-.5-11 6.500 6.500 0 0 1 12-1.500 6.500 6.500 0 0 1 2 12.500z" fill="#c6dcfa" /><path d="M1 20q3-2 8-1 8 2 15-4a6 6 0 0 1-5 8.500H6q-3.500 0-5-3.500z" fill="#8fb2f1" /></Svg></Slot>
        <Slot $w={30} $ml={8} $start><Text w={30} size={14} lh={20} color="#222">30°C</Text></Slot>
        <Slot $w={88} $ml={8} $start><Text w={87.5} size={14} lh={20} color="#222">Mostly cloudy</Text></Slot>
        <Slot $w={13} $ml={22}><Svg w={12} h={8}><path d="M.7 7L6 1.500 11.300 7" stroke="#222" strokeWidth="1.400" /></Svg></Slot>
        <Slot $w={13} $ml={12}><Svg w={13} h={16}><rect x="1" y="4" width="8" height="8" rx="2" stroke="#222" strokeWidth="1.300" /><path d="M9 7l3-1.500v5L9 9M2 1.500Q5.500-.5 9 1.500M2 14.500q3.500 2 7 0" stroke="#222" strokeWidth="1.200" /></Svg></Slot>
        <Slot $w={14} $ml={11}><Svg w={14}><path d="M1 13A12 12 0 0 1 13 1.500M4.500 13A8.500 8.500 0 0 1 13 5M8 13a5 5 0 0 1 5-4.500" stroke="#444" strokeWidth="1.100" /><circle cx="11.500" cy="12" r="1.600" fill="#111" /></Svg></Slot>
        <Slot $w={17} $ml={8}><Svg w={17} h={14}><path d="M.7 4.700h3L7.500 1.200v11.600L3.700 9.300h-3zM9.500 4.500q1.500 2.500 0 5M11.800 2.700q2.700 4.300 0 8.600M14 1q3.700 6 0 12" stroke="#222" strokeWidth="1.100" /></Svg></Slot>
        <Slot $w={24} $ml={9} $start><Text w={24} size={12} color="#222">ENG</Text></Slot>
        <Clock>
          <Text w={28} color="#222">18:09</Text>
          <Text w={59} color="#222">19-03-2023</Text>
        </Clock>
        <Slot $w={17} $ml={17}><Svg w={17} h={18}><path d="M.7 1.700h15.600v12H11L8 17v-3.300H.7z" stroke="#222" strokeWidth="1.200" /></Svg></Slot>
      </Taskbar>

      <Menu>
        <MenuSearch><Text w={101} weight={700}>Search the menus</Text></MenuSearch>
        <Item icon={<CutIcon />} w={20}>Cu<u>t</u></Item>
        <Item icon={<CopyIcon />} w={29}><u>C</u>opy</Item>
        <MenuHead><PasteSmall /><MenuHeadText><Text w={80} weight={700}>Paste Options:</Text></MenuHeadText></MenuHead>
        <PasteRow>
          <PasteCell $on><PasteOption kind="theme" /></PasteCell>
          <PasteCell><PasteOption kind="source" /></PasteCell>
          <PasteCell><PasteOption kind="text" /></PasteCell>
        </PasteRow>
        <MenuLine />
        <Item icon={<NewSlideIcon />} w={53}><u>N</u>ew Slide</Item>
        <Item icon={<DuplicateIcon />} w={79}>Duplic<u>a</u>te Slide</Item>
        <Item icon={<DeleteIcon />} w={62}><u>D</u>elete Slide</Item>
        <Item icon={<SectionIcon />} w={65}><u>A</u>dd Section</Item>
        <MenuLine />
        <Item icon={<LayoutIcon />} w={37} arrow><u>L</u>ayout</Item>
        <Item icon={<ResetIcon />} w={57}><u>R</u>eset Slide</Item>
        <Item icon={<FormatBgIcon />} w={115}>Format <u>B</u>ackground...</Item>
        <MenuLine />
        <Item icon={<PhotoAlbumIcon />} w={81} off><u>P</u>hoto Album...</Item>
        <Item icon={<HideIcon />} w={54}><u>H</u>ide Slide</Item>
        <MenuLine />
        <Item icon={<CommentAddIcon />} w={82}>New Co<u>m</u>ment</Item>
      </Menu>
    </Window>
  );
}
